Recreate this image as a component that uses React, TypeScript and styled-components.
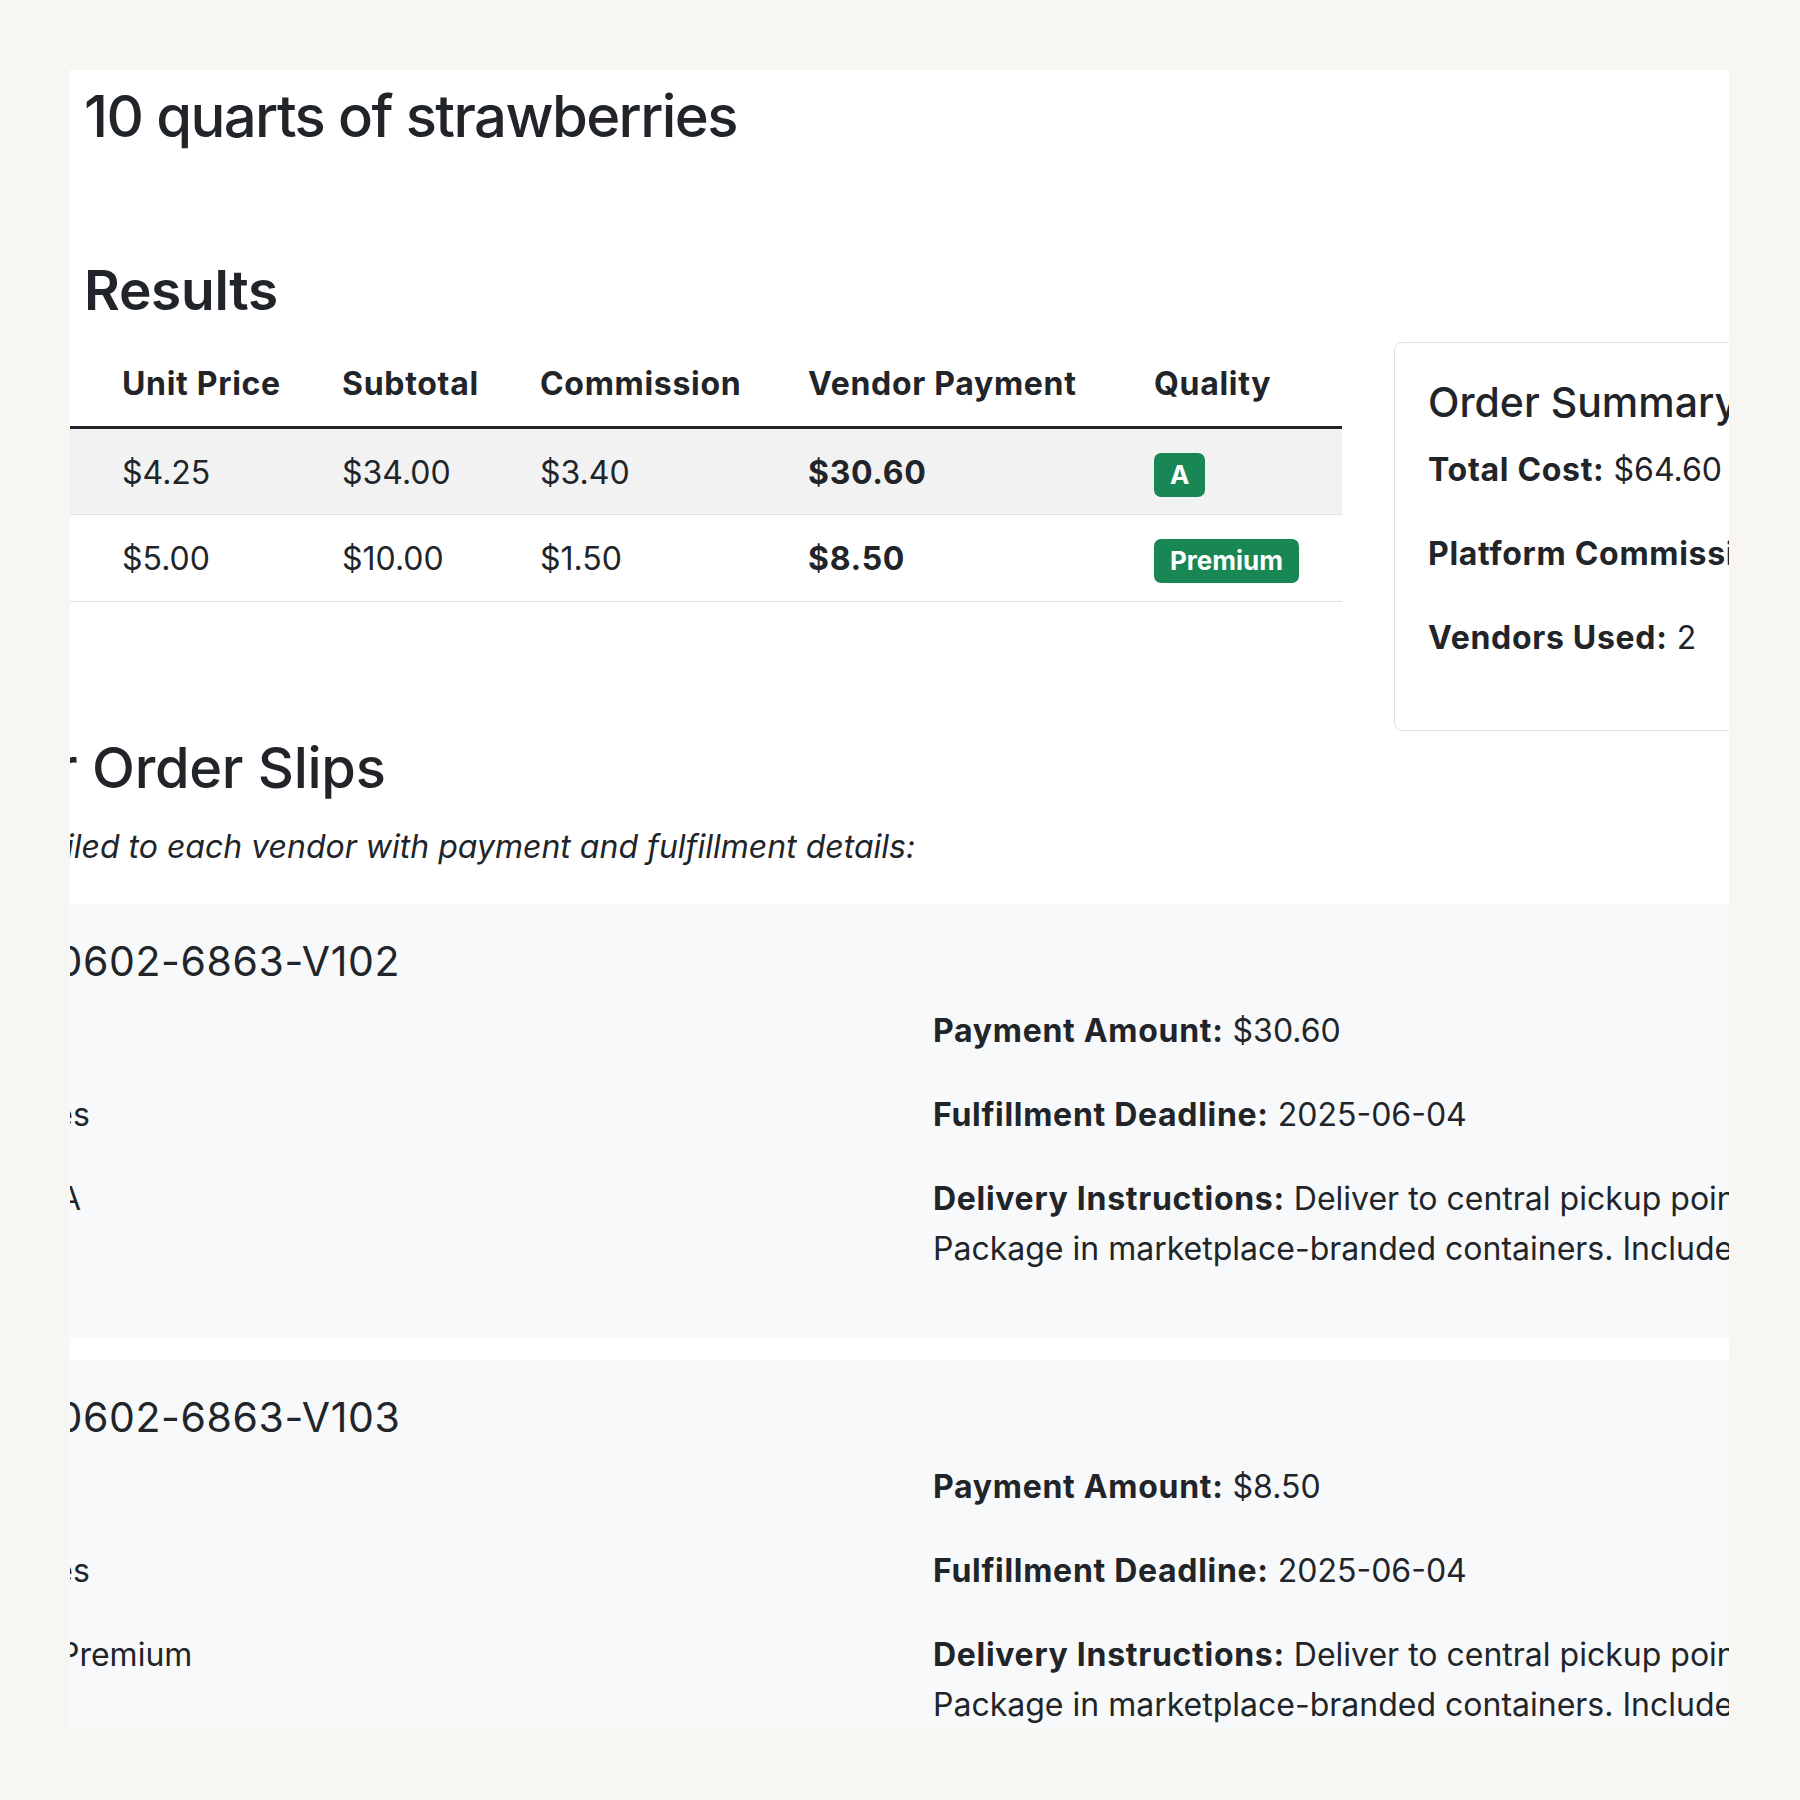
import styled, { createGlobalStyle } from "styled-components";

const GlobalStyle = createGlobalStyle`
  body {
    margin: 0;
    background: #f7f6f2;
    font-family: Inter, "Noto Sans", "Liberation Sans", sans-serif;
    color: #212529;
  }
  strong {
    font-weight: 700;
    letter-spacing: 0.7px;
  }
`;

const Page = styled.div`
  padding: 70px;
`;

const Panel = styled.main`
  width: 1659px;
  height: 1659px;
  background: #ffffff;
  overflow: hidden;
`;

const Title = styled.h1`
  margin: 12px 0 0;
  padding-left: 14px;
  font-size: 58px;
  font-weight: 500;
  line-height: 1.2;
  letter-spacing: -1.6px;
`;

const SectionTitle = styled.h2`
  margin: 105px 0 0;
  padding-left: 14px;
  font-size: 55px;
  font-weight: 600;
  line-height: 1.2;
  letter-spacing: -0.3px;
`;

const ResultsRow = styled.div`
  display: flex;
  align-items: flex-start;
  gap: 52px;
  margin-top: 19px;
`;

const Table = styled.table`
  width: 1272px;
  flex: 0 0 1272px;
  border-collapse: collapse;
  table-layout: fixed;
  font-size: 32px;
  line-height: 50px;
`;

const Th = styled.th<{ $first?: boolean }>`
  text-align: left;
  font-weight: 700;
  letter-spacing: 0.7px;
  padding: 17px 16px 17px ${(p) => (p.$first ? 52 : 16)}px;
  border-bottom: 3px solid #212529;
  white-space: nowrap;
`;

const Tr = styled.tr<{ $striped?: boolean }>`
  background: ${(p) => (p.$striped ? "#f2f2f2" : "transparent")};
  border-bottom: 1px solid #dee2e6;
`;

const Td = styled.td<{ $first?: boolean; $bold?: boolean }>`
  padding: 19px 16px 16.5px ${(p) => (p.$first ? 52 : 16)}px;
  font-weight: ${(p) => (p.$bold ? 700 : 400)};
  letter-spacing: ${(p) => (p.$bold ? "0.7px" : "normal")};
  white-space: nowrap;
`;

const Badge = styled.span`
  display: inline-block;
  padding: 9px 16px;
  font-size: 26px;
  font-weight: 700;
  line-height: 1;
  letter-spacing: normal;
  color: #ffffff;
  background: #198754;
  border-radius: 7px;
`;

const SummaryCard = styled.aside`
  flex: 0 0 600px;
  border: 1px solid #dee2e6;
  border-radius: 8px;
  padding: 35px 33px 33px;
  background: #ffffff;
`;

const SummaryTitle = styled.h5`
  margin: 0 0 18px;
  font-size: 41px;
  font-weight: 500;
  line-height: 1.2;
  white-space: nowrap;
`;

const Line = styled.p`
  margin: 0 0 34px;
  font-size: 32px;
  line-height: 50px;
  white-space: nowrap;
`;

/* a line whose visible part starts at a fixed x; the text before it hangs off the panel's left edge */
const CutRow = styled.div`
  display: flex;
  white-space: nowrap;
`;

const Before = styled.span<{ $at: number }>`
  flex: 0 0 ${(p) => p.$at + 400}px;
  margin-left: -400px;
  min-width: 0;
  display: flex;
  justify-content: flex-end;
`;

const SlipsHeading = styled(CutRow)`
  margin: 4px 0 0;
  font-size: 56px;
  font-weight: 500;
  line-height: 1.2;
  letter-spacing: -0.3px;
`;

const SlipsNote = styled(CutRow)`
  margin: 20px 0 32px;
  font-size: 32px;
  line-height: 50px;
  font-style: italic;
`;

const SlipCard = styled.section`
  width: calc(100% + 600px);
  background: #f8f9fa;
  padding: 33px 0 30px;
  margin-bottom: 22px;
`;

const SlipTitle = styled(CutRow)`
  margin: 0 0 20px;
  font-size: 41px;
  font-weight: 400;
  line-height: 1.2;
  letter-spacing: 0.6px;
`;

const SlipGrid = styled.div`
  display: grid;
  grid-template-columns: 863px 1300px;
  font-size: 32px;
  line-height: 50px;
`;

const SlipLine = styled.p`
  margin: 0 0 34px;
`;

const SlipCutLine = styled(CutRow)`
  margin: 0 0 34px;
  height: 50px;
`;

type Slip = {
  id: string;
  vendor: string;
  quality: string;
  payment: string;
};

const slips: Slip[] = [
  { id: "0602-6863-V102", vendor: "Berry Hill Farm", quality: "A", payment: "$30.60" },
  { id: "0602-6863-V103", vendor: "Sunrise Orchards", quality: "Premium", payment: "$8.50" },
];

const rows = [
  { unit: "$4.25", subtotal: "$34.00", commission: "$3.40", pay: "$30.60", quality: "A" },
  { unit: "$5.00", subtotal: "$10.00", commission: "$1.50", pay: "$8.50", quality: "Premium" },
];

const VendorSlip = ({ slip }: { slip: Slip }) => (
  <SlipCard>
    <SlipTitle as="h5">
      <Before $at={13}>Order #MKT-20250</Before>
      <span>{slip.id.slice(1)}</span>
    </SlipTitle>
    <SlipGrid>
      <div>
        <SlipCutLine>
          <Before $at={-30}>
            <span>
              <strong>Vendor:</strong>
              {"\u00a0" + slip.vendor}
            </span>
          </Before>
        </SlipCutLine>
        <SlipCutLine>
          <Before $at={3}>
            <span>
              <strong>Item:</strong>
              {"\u00a0Strawberrie"}
            </span>
          </Before>
          <span>s</span>
        </SlipCutLine>
        <SlipCutLine>
          <Before $at={-11}>
            <strong>Quality:{"\u00a0"}</strong>
          </Before>
          <span>{slip.quality}</span>
        </SlipCutLine>
      </div>
      <div>
        <SlipLine>
          <strong>Payment Amount:</strong> {slip.payment}
        </SlipLine>
        <SlipLine>
          <strong>Fulfillment Deadline:</strong> 2025-06-04
        </SlipLine>
        <SlipLine>
          <strong>Delivery Instructions:</strong> Deliver to central pickup point by 8:00 AM.
          <br />
          Package in marketplace-branded containers. Include this slip.
        </SlipLine>
      </div>
    </SlipGrid>
  </SlipCard>
);

export default function App() {
  return (
    <>
      <GlobalStyle />
      <Page>
        <Panel>
          <Title>10 quarts of strawberries</Title>
          <SectionTitle>Results</SectionTitle>
          <ResultsRow>
            <Table>
              <colgroup>
                <col style={{ width: 256 }} />
                <col style={{ width: 198 }} />
                <col style={{ width: 268 }} />
                <col style={{ width: 346 }} />
                <col style={{ width: 204 }} />
              </colgroup>
              <thead>
                <tr>
                  <Th $first>Unit Price</Th>
                  <Th>Subtotal</Th>
                  <Th>Commission</Th>
                  <Th>Vendor Payment</Th>
                  <Th>Quality</Th>
                </tr>
              </thead>
              <tbody>
                {rows.map((r, i) => (
                  <Tr key={r.unit} $striped={i % 2 === 0}>
                    <Td $first>{r.unit}</Td>
                    <Td>{r.subtotal}</Td>
                    <Td>{r.commission}</Td>
                    <Td $bold>{r.pay}</Td>
                    <Td>
                      <Badge>{r.quality}</Badge>
                    </Td>
                  </Tr>
                ))}
              </tbody>
            </Table>
            <SummaryCard>
              <SummaryTitle>Order Summary</SummaryTitle>
              <Line>
                <strong>Total Cost:</strong> $64.60
              </Line>
              <Line>
                <strong>Platform Commission:</strong> $4.90
              </Line>
              <Line>
                <strong>Vendors Used:</strong> 2
              </Line>
            </SummaryCard>
          </ResultsRow>
          <SlipsHeading as="h2">
            <Before $at={22}>Vendor{"\u00a0"}</Before>
            <span>Order Slips</span>
          </SlipsHeading>
          <SlipsNote as="p">
            <Before $at={-4}>Individual order slips ema</Before>
            <span>iled to each vendor with payment and fulfillment details:</span>
          </SlipsNote>
          {slips.map((s) => (
            <VendorSlip key={s.id} slip={s} />
          ))}
        </Panel>
      </Page>
    </>
  );
}
